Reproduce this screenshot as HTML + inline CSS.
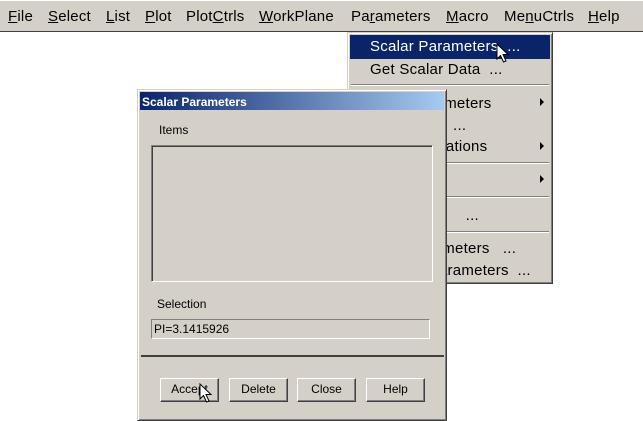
<!DOCTYPE html>
<html><head><style>
*{margin:0;padding:0;box-sizing:border-box}
body{width:643px;height:421px;background:#fff;position:relative;overflow:hidden;font-family:"Liberation Sans",Arial,sans-serif}
.a{position:absolute}
#bar{left:0;top:0;width:643px;height:32px;background:#d4d0c8;border-bottom:1px solid #404040;border-top:1px solid #fff}
#bar span{position:absolute;top:7px;font-size:15px;color:#000;letter-spacing:0.2px}
u{text-decoration:underline}
#menu{left:347px;top:32px;width:206px;height:252px;background:#d4d0c8;border:1px solid;border-color:#d4d0c8 #404040 #404040 #d4d0c8;box-shadow:inset 1px 1px 0 #fff,inset -1px -1px 0 #808080}
.mi{position:absolute;font-size:15px;color:#000;white-space:pre;letter-spacing:0.25px}
.r{right:auto}
.sep{position:absolute;left:3px;width:198px;height:2px;border-top:1px solid #808080;border-bottom:1px solid #fff}
.arr{position:absolute;left:192px;width:0;height:0;border-top:4px solid transparent;border-bottom:4px solid transparent;border-left:4px solid #000}
#dlg{left:137px;top:89px;width:310px;height:332px;background:#d4d0c8;border:1px solid;border-color:#d4d0c8 #404040 #404040 #d4d0c8;box-shadow:inset 1px 1px 0 #fff,inset -1px -1px 0 #808080}
#title{left:2px;top:2px;width:304px;height:18px;background:linear-gradient(90deg,#0a246a,#a6caf0);color:#fff;font-weight:bold;font-size:12px;padding:3px 0 0 2px}
.lbl{position:absolute;font-size:12px}
.btn{position:absolute;top:288px;width:59px;height:24px;border:1px solid;border-color:#fff #404040 #404040 #fff;box-shadow:inset -1px -1px 0 #808080;font-size:12px;text-align:center;line-height:21px}
</style></head><body>
<div id="bar" class="a">
<span style="left:8px"><u>F</u>ile</span>
<span style="left:48px"><u>S</u>elect</span>
<span style="left:106px"><u>L</u>ist</span>
<span style="left:145px"><u>P</u>lot</span>
<span style="left:186px">Plot<u>C</u>trls</span>
<span style="left:259px"><u>W</u>orkPlane</span>
<span style="left:351px">Pa<u>r</u>ameters</span>
<span style="left:446px"><u>M</u>acro</span>
<span style="left:504px">Me<u>n</u>uCtrls</span>
<span style="left:588px"><u>H</u>elp</span>
</div>
<div id="menu" class="a">
<div class="a" style="left:2px;top:2px;width:200px;height:24px;background:#0a246a"></div>
<div class="mi" style="left:22px;top:5px;color:#fff">Scalar Parameters  ...</div>
<div class="mi" style="left:22px;top:28px">Get Scalar Data  ...</div>
<div class="sep" style="top:51px"></div>
<div class="mi" style="left:22px;top:62px">Array Parameters</div><div class="arr" style="top:65px"></div>
<div class="mi" style="left:22px;top:84px">Array Data  ...</div>
<div class="mi" style="left:22px;top:105px">Array Operations</div><div class="arr" style="top:109px"></div>
<div class="sep" style="top:129px"></div>
<div class="mi" style="left:22px;top:137px">Functions</div><div class="arr" style="top:142px"></div>
<div class="sep" style="top:163px"></div>
<div class="mi" style="left:22px;top:174px">Array Lists     ...</div>
<div class="sep" style="top:198px"></div>
<div class="mi" style="left:22px;top:207px">Save Parameters   ...</div>
<div class="mi" style="left:22px;top:229px">Restore Parameters  ...</div>
<svg class="a" style="left:148px;top:10px" width="14" height="22" viewBox="0 0 14 22"><path d="M1 1 L1 16 L4.5 12.5 L7.5 19 L10 18 L7 11.5 L12 11.5 Z" fill="#fff" stroke="#000" stroke-width="1"/></svg>
</div>
<div id="dlg" class="a">
<div id="title" class="a">Scalar Parameters</div>
<div class="lbl" style="left:21px;top:33px">Items</div>
<div class="a" style="left:13px;top:55px;width:282px;height:137px;border:1px solid;border-color:#808080 #fff #fff #808080;box-shadow:inset 1px 1px 0 #404040"></div>
<div class="lbl" style="left:19px;top:207px">Selection</div>
<div class="a" style="left:13px;top:229px;width:279px;height:20px;border:1px solid;border-color:#808080 #fff #fff #808080;font-size:12px;padding:2px 0 0 2px">PI=3.1415926</div>
<div class="a" style="left:3px;top:265px;width:303px;height:2px;background:#404040"></div>
<div class="btn" style="left:22px">Accept</div>
<div class="btn" style="left:91px">Delete</div>
<div class="btn" style="left:159px">Close</div>
<div class="btn" style="left:228px">Help</div>
<svg class="a" style="left:61px;top:293px" width="14" height="22" viewBox="0 0 14 22"><path d="M1 1 L1 16 L4.5 12.5 L7.5 19 L10 18 L7 11.5 L12 11.5 Z" fill="#fff" stroke="#000" stroke-width="1"/></svg>
</div>
</body></html>
